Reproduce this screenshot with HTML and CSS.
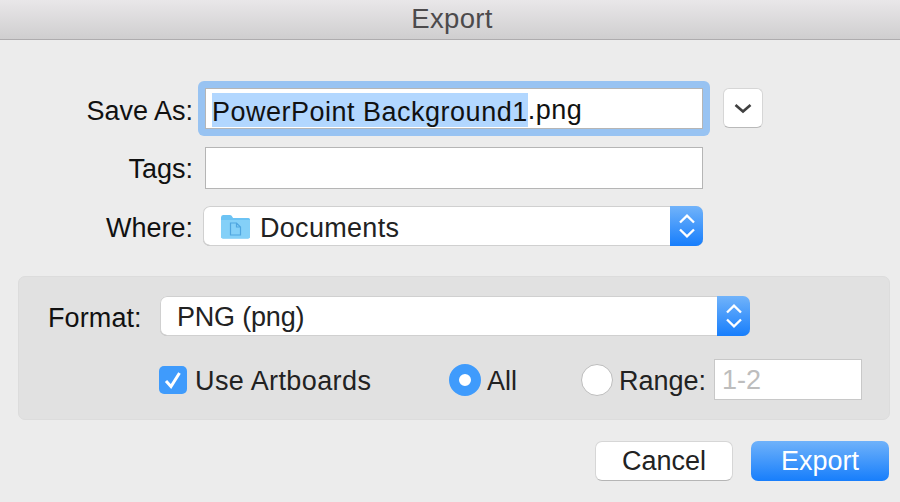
FILE: index.html
```html
<!DOCTYPE html>
<html lang="en">
<head>
  <meta charset="UTF-8" />
  <title>Export</title>
  <link rel="stylesheet" href="styles.css">
</head>
<body>
  <div class="dialog">
    <div class="titlebar">Export</div>

    <div class="row row-save">
      <label class="label">Save As:</label>
      <div class="focus-ring">
        <div class="name-field"><span class="selected">PowerPoint Background1</span>.png</div>
      </div>
      <button class="expand-btn" aria-label="Expand">
        <svg width="18" height="11" viewBox="0 0 18 11"><path d="M1.5 2 L9 8.6 L16.5 2" fill="none" stroke="#404040" stroke-width="2.6"/></svg>
      </button>
    </div>

    <div class="row row-tags">
      <label class="label">Tags:</label>
      <input class="text-field tags-field" type="text">
    </div>

    <div class="row row-where">
      <label class="label">Where:</label>
      <div class="select where-select">
        <svg class="folder" width="31" height="25" viewBox="0 0 31 25">
          <path d="M1 3.5 Q1 1 3 1 H10 Q11.5 1 12.5 3 L13 4 H28.5 Q30 4 30 5.5 V22.5 Q30 24.5 28 24.5 H3 Q1 24.5 1 22.5 Z" fill="#6cc3f4"/>
          <path d="M1 6 H30 V22.5 Q30 24.5 28 24.5 H3 Q1 24.5 1 22.5 Z" fill="#84d0f8"/>
          <path d="M10.5 9 H16.5 L20.5 13 V21 H10.5 Z M16.5 9 V13 H20.5" fill="none" stroke="#4fa6e0" stroke-width="1.2"/>
        </svg>
        <span class="select-text documents">Documents</span>
        <span class="stepper">
          <svg width="16" height="26" viewBox="0 0 16 26"><path d="M1 9.5 L8 2.6 L15 9.5 M1 16.5 L8 23.4 L15 16.5" fill="none" stroke="#fff" stroke-width="2.3"/></svg>
        </span>
      </div>
    </div>

    <div class="panel">
      <div class="format-row">
        <label class="format-label">Format:</label>
        <div class="select format-select">
          <span class="select-text png">PNG (png)</span>
          <span class="stepper">
            <svg width="16" height="26" viewBox="0 0 16 26"><path d="M1 9.5 L8 2.6 L15 9.5 M1 16.5 L8 23.4 L15 16.5" fill="none" stroke="#fff" stroke-width="2.3"/></svg>
          </span>
        </div>
      </div>

      <div class="options-row">
        <span class="checkbox">
          <svg width="20" height="20" viewBox="0 0 20 20"><path d="M3 11 L8 16.5 L16.5 3" fill="none" stroke="#fff" stroke-width="3"/></svg>
        </span>
        <span class="option-text artboards">Use Artboards</span>
        <span class="radio radio-on"></span>
        <span class="option-text all">All</span>
        <span class="radio"></span>
        <span class="option-text range">Range:</span>
        <input class="text-field range-field" type="text" placeholder="1-2">
      </div>
    </div>

    <div class="footer">
      <button class="btn">Cancel</button>
      <button class="btn btn-primary">Export</button>
    </div>
  </div>
</body>
</html>
```

FILE: styles.css
```css
body {
  margin: 0;
  background: #ececec;
  font-family: "Liberation Sans", Arial, sans-serif;
  font-size: 27px;
  color: #111;
}

.dialog {
  width: 900px;
  height: 502px;
  overflow: hidden;
}

.titlebar {
  height: 39px;
  line-height: 37px;
  text-align: center;
  padding-left: 4px;
  font-size: 27.5px;
  letter-spacing: 0.3px;
  color: #4c4a4c;
  background: linear-gradient(#e9e7e9, #cfcecf);
  border-bottom: 1px solid #aeacae;
}

.row {
  display: flex;
  align-items: center;
}

.label {
  width: 193px;
  box-sizing: border-box;
  text-align: right;
  flex: none;
  padding-top: 4px;
}

.row-save {
  margin-top: 40px;
  height: 56px;
}

.row-save .label {
  padding-top: 6px;
}

.row-tags {
  margin-top: 11px;
  height: 42px;
}

.row-tags .label {
  padding-top: 2px;
}

.row-where {
  margin-top: 17px;
  height: 40px;
}

.focus-ring {
  margin-left: 5px;
  width: 498px;
  padding: 7px;
  background: #98c3f2;
  border-radius: 6px;
}

.name-field {
  height: 41px;
  line-height: 43px;
  padding: 0 6px;
  background: #fff;
  border: 1px solid #b5b5b5;
  box-sizing: border-box;
  white-space: nowrap;
  letter-spacing: 0.5px;
}

.selected {
  display: inline-block;
  height: 34px;
  line-height: 38px;
  background: #b2d7ff;
  vertical-align: top;
  margin-top: 4px;
}

.expand-btn {
  margin-left: 13px;
  width: 40px;
  height: 40px;
  padding: 0;
  display: flex;
  align-items: center;
  justify-content: center;
  background: #fff;
  border: 1px solid #d6d6d6;
  border-bottom-color: #b9b9b9;
  border-radius: 6px;
}

.text-field {
  box-sizing: border-box;
  background: #fff;
  border: 1px solid #b5b5b5;
  border-radius: 0;
  font: inherit;
  padding: 0 6px;
  outline: none;
}

.tags-field {
  margin-left: 12px;
  width: 498px;
  height: 42px;
}

.select {
  box-sizing: border-box;
  height: 40px;
  display: flex;
  align-items: center;
  background: #fff;
  box-shadow: inset 0 0 0 1px #d0d0d0, inset 0 -1px 0 #aaa;
  border-radius: 7px;
}

.where-select {
  margin-left: 10px;
  width: 500px;
  padding-left: 17px;
}

.folder {
  flex: none;
  margin-right: 9px;
}

.select-text {
  color: #222;
  padding-top: 4px;
}

.documents {
  letter-spacing: 0.3px;
}

.png {
  letter-spacing: -0.2px;
  padding-top: 2px;
}

.stepper {
  margin-left: auto;
  align-self: stretch;
  width: 33px;
  display: flex;
  align-items: center;
  justify-content: center;
  background: linear-gradient(#71b3fa, #177efc);
  border-radius: 0 7px 7px 0;
}

.panel {
  margin: 30px 10px 0 18px;
  height: 144px;
  box-sizing: border-box;
  padding: 19px 0 0 29px;
  background: #e1e1e1;
  border: 1px solid #dcdcdc;
  border-radius: 7px;
}

.format-row {
  display: flex;
  align-items: center;
}

.format-label {
  width: 112px;
  flex: none;
  padding-top: 4px;
  letter-spacing: 0.1px;
}

.format-select {
  width: 590px;
  padding-left: 17px;
}

.options-row {
  display: flex;
  align-items: center;
  height: 41px;
  margin-top: 23px;
  margin-left: 111px;
}

.checkbox {
  width: 28px;
  height: 28px;
  flex: none;
  display: flex;
  align-items: center;
  justify-content: center;
  background: #3f9bfc;
  border-radius: 5px;
}

.option-text {
  color: #222;
  white-space: nowrap;
  padding-top: 4px;
}

.artboards {
  margin-left: 8px;
  width: 254px;
  letter-spacing: 0.4px;
}

.radio {
  width: 32px;
  height: 32px;
  flex: none;
  box-sizing: border-box;
  background: #fff;
  border: 1px solid #bdbdbd;
  border-radius: 50%;
}

.radio-on {
  border: 10.5px solid #3f9bfc;
}

.all {
  margin-left: 6px;
  width: 94px;
}

.range {
  margin-left: 6px;
  width: 95px;
}

.range-field {
  width: 148px;
  height: 41px;
  border-color: #c8c8c8;
  padding-left: 7px;
  padding-top: 2px;
}

.range-field::placeholder {
  color: #bdbdbd;
}

.footer {
  display: flex;
  justify-content: flex-end;
  gap: 18px;
  margin-top: 21px;
  padding-right: 11px;
}

.btn {
  width: 138px;
  height: 40px;
  padding: 0;
  font: inherit;
  color: #222;
  background: #fff;
  border: 1px solid #d6d6d6;
  border-bottom-color: #b5b5b5;
  border-radius: 7px;
}

.btn-primary {
  color: #fff;
  background: linear-gradient(#6fb2fa, #177efc);
  border: none;
}
```
